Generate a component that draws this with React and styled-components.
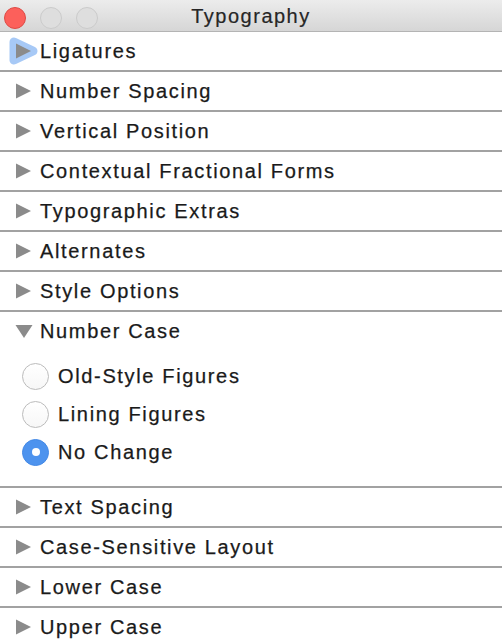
import styled, { createGlobalStyle } from 'styled-components';

const GlobalStyle = createGlobalStyle`
  html, body {
    margin: 0;
    padding: 0;
    background: #ffffff;
    overflow: hidden;
  }
  body {
    font-family: 'Liberation Sans', Arial, sans-serif;
  }
`;

const Window = styled.div`
  width: 502px;
  height: 640px;
  display: flex;
  flex-direction: column;
  background: #ffffff;
  overflow: hidden;
`;

const TitleBar = styled.div`
  position: relative;
  flex: 0 0 31px;
  display: flex;
  align-items: center;
  justify-content: center;
  background: linear-gradient(#ececec, #d6d6d6);
  border-bottom: 1px solid #b4b4b4;
`;

const Lights = styled.div`
  position: absolute;
  left: 4px;
  top: 7px;
  display: flex;
  gap: 14px;
`;

const Light = styled.span`
  width: 22px;
  height: 22px;
  box-sizing: border-box;
  border-radius: 50%;
  background: ${(p) => (p.$red ? '#fc605b' : '#dedede')};
  border: 1px solid ${(p) => (p.$red ? '#de4a45' : '#cbcbcb')};
`;

const Title = styled.div`
  font-size: 20px;
  letter-spacing: 1.5px;
  color: #262626;
  margin-top: 1px;
  -webkit-text-stroke: 0.2px #262626;
`;

const Section = styled.div`
  border-bottom: 2px solid #a2a2a2;
  flex-shrink: 0;
`;

const Header = styled.div`
  height: 38px;
  display: flex;
  align-items: center;
  padding-left: 16px;
`;

const Toggle = styled.span`
  position: relative;
  width: 16px;
  height: 16px;
  display: flex;
  align-items: center;
  justify-content: center;
  margin-right: 8px;
`;

const Label = styled.span`
  font-size: 20px;
  letter-spacing: 1.65px;
  color: #1a1a1a;
  white-space: nowrap;
  -webkit-text-stroke: 0.25px #1a1a1a;
`;

const Body = styled.div`
  padding: 7px 0 15px 22px;
  display: flex;
  flex-direction: column;
`;

const Option = styled.div`
  height: 38px;
  display: flex;
  align-items: center;
`;

const Radio = styled.span`
  width: 27px;
  height: 27px;
  box-sizing: border-box;
  border-radius: 50%;
  margin-right: 9px;
  display: flex;
  align-items: center;
  justify-content: center;
  background: ${(p) => (p.$on ? '#4d93ee' : 'linear-gradient(#ffffff, #f7f7f7)')};
  border: 1px solid ${(p) => (p.$on ? '#4389e6' : '#bcbcbc')};

  &::after {
    content: '';
    width: 8px;
    height: 8px;
    border-radius: 50%;
    background: #ffffff;
    display: ${(p) => (p.$on ? 'block' : 'none')};
  }
`;

const Arrow = ({ open, focus }) => (
  <svg width="32" height="32" viewBox="0 0 32 32" style={{ position: 'absolute', left: -8, top: -8 }}>
    {focus && (
      <path
        d="M6 7 L25 16 L6 25 Z"
        fill="#a7c9f6"
        stroke="#a7c9f6"
        strokeWidth="9"
        strokeLinejoin="round"
      />
    )}
    {open ? (
      <path d="M7.5 10 L24.5 10 L16 23 Z" fill="#8b8b8b" />
    ) : (
      <path d="M8 8.5 L23 16 L8 23.5 Z" fill="#8b8b8b" />
    )}
  </svg>
);

const sections = [
  { name: 'Ligatures', focus: true },
  { name: 'Number Spacing' },
  { name: 'Vertical Position' },
  { name: 'Contextual Fractional Forms' },
  { name: 'Typographic Extras' },
  { name: 'Alternates' },
  { name: 'Style Options' },
  {
    name: 'Number Case',
    open: true,
    options: ['Old-Style Figures', 'Lining Figures', 'No Change'],
    selected: 2,
  },
  { name: 'Text Spacing' },
  { name: 'Case-Sensitive Layout' },
  { name: 'Lower Case' },
  { name: 'Upper Case' },
];

export default function App() {
  return (
    <>
      <GlobalStyle />
      <Window>
        <TitleBar>
          <Lights>
            <Light $red />
            <Light />
            <Light />
          </Lights>
          <Title>Typography</Title>
        </TitleBar>
        {sections.map((s) => (
          <Section key={s.name}>
            <Header>
              <Toggle>
                <Arrow open={s.open} focus={s.focus} />
              </Toggle>
              <Label>{s.name}</Label>
            </Header>
            {s.open && (
              <Body>
                {s.options.map((o, i) => (
                  <Option key={o}>
                    <Radio $on={i === s.selected} />
                    <Label>{o}</Label>
                  </Option>
                ))}
              </Body>
            )}
          </Section>
        ))}
      </Window>
    </>
  );
}
